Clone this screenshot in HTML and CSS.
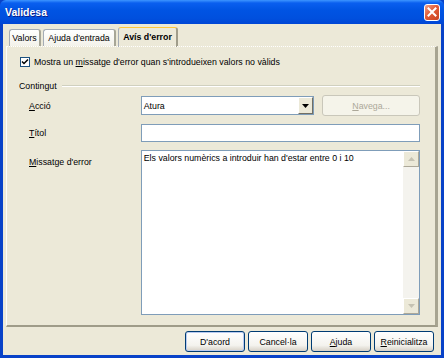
FILE: index.html
```html
<!DOCTYPE html>
<html lang="ca">
<head>
    <meta charset="UTF-8">
    <title>Validesa</title>
    <link rel="stylesheet" href="styles.css">
</head>
<body>
<div class="window">
    <div class="titlebar">
        <span class="title">Validesa</span>
        <span class="close">
            <svg width="10" height="10" viewBox="0 0 10 10"><path d="M1.5 1.5 L8.5 8.5 M8.5 1.5 L1.5 8.5" stroke="#fff" stroke-width="2" stroke-linecap="square"/></svg>
        </span>
    </div>
    <div class="client">
        <div class="tabs">
            <span class="tab t1">Valors</span>
            <span class="tab t2">Ajuda d'entrada</span>
            <span class="tab t3 active">Avís d'error</span>
        </div>
        <div class="panel">
            <label class="check">
                <span class="box">
                    <svg width="8" height="8" viewBox="0 0 8 8"><path d="M1 3.5 L3 5.5 L7 1.5" fill="none" stroke="#000" stroke-width="1.5"/></svg>
                </span>
                <span>Mostra un <u>m</u>issatge d'error quan s'introdueixen valors no vàlids</span>
            </label>
            <div class="group">
                <span class="group-title">Contingut</span>
                <span class="group-line"></span>
            </div>
            <div class="row r1">
                <span class="label"><u>A</u>cció</span>
                <div class="combo">
                    <span class="combo-text">Atura</span>
                    <span class="combo-btn">
                        <svg width="7" height="4" viewBox="0 0 7 4"><path d="M0 0 H7 L3.5 4 Z" fill="#000"/></svg>
                    </span>
                </div>
                <span class="btn disabled"><u>N</u>avega...</span>
            </div>
            <div class="row r2">
                <span class="label"><u>T</u>ítol</span>
                <div class="field"></div>
            </div>
            <div class="row r3">
                <span class="label"><u>M</u>issatge d'error</span>
                <div class="memo">
                    <div class="memo-text">Els valors numèrics a introduir han d'estar entre 0 i 10</div>
                    <div class="scroll">
                        <span class="arrow">
                            <svg width="7" height="4" viewBox="0 0 7 4"><path d="M0 4 H7 L3.5 0 Z" fill="#C5C2B2"/></svg>
                        </span>
                        <span class="track"></span>
                        <span class="arrow">
                            <svg width="7" height="4" viewBox="0 0 7 4"><path d="M0 0 H7 L3.5 4 Z" fill="#C5C2B2"/></svg>
                        </span>
                    </div>
                </div>
            </div>
        </div>
        <div class="buttons">
            <span class="btn default">D'acord</span>
            <span class="btn">Cancel·la</span>
            <span class="btn"><u>A</u>juda</span>
            <span class="btn"><u>R</u>einicialitza</span>
        </div>
    </div>
</div>
</body>
</html>
```

FILE: styles.css
```css
*{
    margin: 0;
    padding: 0;
    box-sizing: border-box;
}
body{
    font-family: "Liberation Sans", Arial, sans-serif;
    font-size: 8.8px;
    color: #000;
    background: #fff;
}
u{text-decoration: underline;}

.window{
    width: 444px;
    height: 358px;
    display: flex;
    flex-direction: column;
    background: #0842C8;
}
.titlebar{
    height: 24px;
    display: flex;
    align-items: center;
    justify-content: space-between;
    padding: 0 4px 0 5px;
    background: linear-gradient(#3D95FF 0, #0A5FEF 3px, #0054E3 10px, #0050DE 18px, #0046D5 24px);
    border-radius: 6px 6px 0 0;
}
.title{
    color: #fff;
    font-weight: bold;
    font-size: 10.5px;
    text-shadow: 1px 1px 0 #0A1E8A;
}
.close{
    width: 16px;
    height: 17px;
    display: flex;
    align-items: center;
    justify-content: center;
    border: 1px solid #fff;
    border-radius: 3px;
    background: linear-gradient(135deg, #EFA28A 0, #E25B36 45%, #C9431F 100%);
}

/* zona grisa del dialeg */
.client{
    flex: 1;
    margin: 0 3px 3px 3px;
    background: #ECE9D8;
    display: flex;
    flex-direction: column;
    padding: 3px 3px 0 3px;
}
.tabs{
    display: flex;
    padding-left: 3px;
    height: 19px;
    align-items: flex-end;
}
.tab{
    height: 17px;
    display: flex;
    align-items: center;
    justify-content: center;
    border: 1px solid #A5ACB5;
    border-bottom: none;
    border-right: 2px solid #A7A697;
    border-radius: 3px 3px 0 0;
    background: linear-gradient(#FFFFFF, #F3F2EA);
    margin-right: 2px;
}
.t1{width: 32px;}
.t2{width: 73px;}
.t3{width: 60px;}
.tab.active{
    height: 20px;
    font-weight: bold;
    background: #ECE9D8;
    border-top: 1px solid #FFC73C;
    border-right: 2px solid #A09D8B;
    margin-bottom: -1px;
    padding-bottom: 2px;
}
.panel{
    height: 281px;
    border-top: 1px dotted #fff;
    border-left: 1px solid #FDFDFB;
    border-right: 3px solid #A7A491;
    border-bottom: 2px solid #9F9C89;
    padding: 9px 15px 0 12px;
    display: flex;
    flex-direction: column;
}
.check{
    display: flex;
    align-items: center;
    gap: 4px;
    padding-left: 1px;
    height: 12px;
}
.box{
    width: 10px;
    height: 10px;
    border: 1px solid #1C5180;
    background: #fff;
    display: flex;
    align-items: center;
    justify-content: center;
}
.group{
    display: flex;
    align-items: center;
    gap: 5px;
    margin-top: 12px;
    height: 12px;
}
.group-line{
    flex: 1;
    height: 2px;
    border-top: 1px solid #D0D0BF;
    border-bottom: 1px solid #fff;
}
.row{
    display: flex;
    align-items: center;
}
.r1{margin-top: 3px; height: 21px;}
.r2{margin-top: 8px;}
.r3{margin-top: 8px; align-items: flex-start;}
.label{
    width: 122px;
    padding-left: 10px;
}
.r3 .label{padding-top: 7px;}
.combo{
    width: 174px;
    height: 19px;
    border: 1px solid #7F9DB9;
    background: #fff;
    display: flex;
    align-items: center;
}
.combo-text{
    flex: 1;
    padding-left: 2px;
}
.combo-btn{
    width: 15px;
    height: 17px;
    border: 1px solid;
    border-color: #fff #716F64 #716F64 #fff;
    background: #ECE9D8;
    display: flex;
    align-items: center;
    justify-content: center;
}
.btn{
    height: 21px;
    display: flex;
    align-items: center;
    justify-content: center;
    border: 1px solid #003C74;
    border-radius: 3px;
    background: linear-gradient(#FFFFFF, #F4F3EE 70%, #D6D0C5);
    color: #000;
}
.btn.disabled{
    width: 98px;
    margin-left: 8px;
    border-color: #C9C7BA;
    background: #F5F4EA;
    color: #ACA899;
}
.field{
    width: 280px;
    height: 18px;
    border: 1px solid #7F9DB9;
    background: #fff;
}
.memo{
    width: 280px;
    height: 165px;
    border: 1px solid #7F9DB9;
    background: #fff;
    display: flex;
}
.memo-text{
    flex: 1;
    padding: 2px 2px;
}
.scroll{
    width: 16px;
    display: flex;
    flex-direction: column;
    background: #F4F3EE;
}
.arrow{
    height: 16px;
    border: 1px solid;
    border-color: #fff #ACA899 #ACA899 #fff;
    background: #ECE9D8;
    display: flex;
    align-items: center;
    justify-content: center;
}
.track{flex: 1;}
.buttons{
    display: flex;
    justify-content: flex-end;
    gap: 3px;
    padding: 4px 4px 0 0;
}
.buttons .btn{
    width: 60px;
}
.btn.default{
    box-shadow: inset 0 0 0 1px #B9CBF0;
}
```
